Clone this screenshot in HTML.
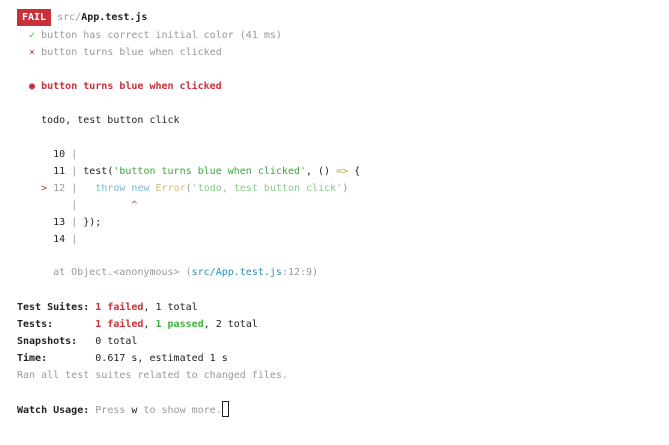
<!DOCTYPE html>
<html><head><style>
body{margin:0;width:669px;height:445px;background:#fff;font-family:"DejaVu Sans Mono","Liberation Mono",monospace;font-size:10px;color:#222;overflow:hidden}
.l{position:absolute;left:17px;white-space:pre;line-height:17px;height:17px}
.g{color:#999}.r{color:#c8313a}.gr{color:#3bb33b}.b{font-weight:bold}
.cy{color:#2a8fb8}.s{color:#3aa63a}.yl{color:#b5a34a}
.badge{background:#c8313a;color:#fff;font-weight:bold;display:inline-block;padding:0 5px;line-height:17px}
</style></head><body>
<div class="l" style="top:9px"><span class="badge">FAIL</span> <span class="g">src/</span><span class="b">App.test.js</span></div>
<div class="l" style="top:27px">  <span class="gr">✓</span> <span class="g">button has correct initial color (41 ms)</span></div>
<div class="l" style="top:44px">  <span class="r">×</span> <span class="g">button turns blue when clicked</span></div>
<div class="l" style="top:78px">  <span class="r b">● button turns blue when clicked</span></div>
<div class="l" style="top:112px">    todo, test button click</div>
<div class="l" style="top:146px">      10 <span class="g">|</span></div>
<div class="l" style="top:163px">      11 <span class="g">|</span> test(<span class="s">'button turns blue when clicked'</span>, () <span class="yl">=&gt;</span> {</div>
<div class="l" style="top:180px">    <span class="r">&gt;</span> <span class="g">12 |</span>   <span style="color:#7ab8d0">throw new</span> <span style="color:#c9bd80">Error</span><span class="g">(</span><span style="color:#8cc98c">'todo, test button click'</span><span class="g">)</span></div>
<div class="l" style="top:197px">         <span class="g">|</span>         <span class="r">^</span></div>
<div class="l" style="top:214px">      13 <span class="g">|</span> });</div>
<div class="l" style="top:231px">      14 <span class="g">|</span></div>
<div class="l" style="top:264px">      <span class="g">at Object.&lt;anonymous&gt; (</span><span class="cy">src/App.test.js</span><span class="g">:12:9)</span></div>
<div class="l" style="top:299px"><span class="b">Test Suites: </span><span class="r b">1 failed</span>, 1 total</div>
<div class="l" style="top:316px"><span class="b">Tests:       </span><span class="r b">1 failed</span>, <span class="gr b">1 passed</span>, 2 total</div>
<div class="l" style="top:333px"><span class="b">Snapshots:   </span>0 total</div>
<div class="l" style="top:350px"><span class="b">Time:        </span>0.617 s, estimated 1 s</div>
<div class="l" style="top:367px"><span class="g">Ran all test suites related to changed files.</span></div>
<div class="l" style="top:401px"><span class="b">Watch Usage: </span><span class="g">Press </span>w<span class="g"> to show more.</span><span style="display:inline-block;width:5px;height:14px;border:1px solid #222;vertical-align:-4px"></span></div>
</body></html>
